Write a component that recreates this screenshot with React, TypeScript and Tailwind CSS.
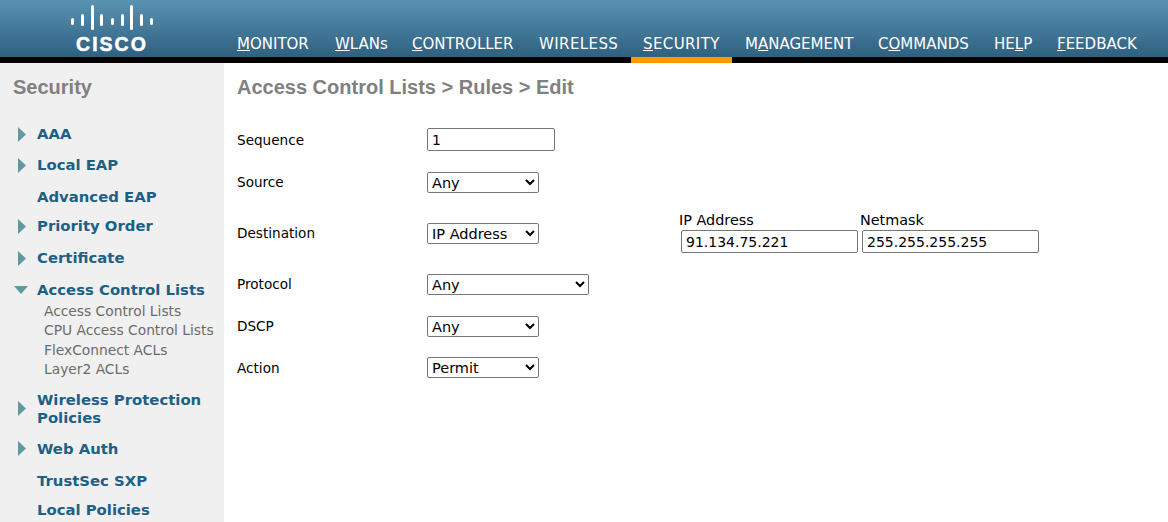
import React from 'react';

const navItems = [
  { key: 'M', rest: 'ONITOR', pre: '', cls: 'w-[98px]' },
  { key: 'W', rest: 'LANs', pre: '', cls: 'w-[77px]' },
  { key: 'C', rest: 'ONTROLLER', pre: '', cls: 'w-[127px]' },
  { key: '', rest: 'WIRELESS', pre: '', cls: 'w-[104px] tracking-[0.400px]' },
  { key: 'S', rest: 'ECURITY', pre: '', cls: 'w-[102px] tracking-[0.400px]' },
  { key: 'A', rest: 'NAGEMENT', pre: 'M', cls: 'w-[133px]' },
  { key: 'O', rest: 'MMANDS', pre: 'C', cls: 'w-[116px]' },
  { key: 'L', rest: 'P', pre: 'HE', cls: 'w-[63px]' },
  { key: 'F', rest: 'EEDBACK', pre: '', cls: 'w-[100px]' },
];

const Arrow = ({ open }: { open?: boolean }) =>
  open ? (
    <svg width="14" height="9" viewBox="0 0 14 9" className="shrink-0 -ml-[4px]">
      <path d="M0 0 H14 L7 8 Z" fill="#5f9aa0" />
    </svg>
  ) : (
    <svg width="9" height="15" viewBox="0 0 9 15" className="shrink-0">
      <path d="M0 0 L8 7.500 L0 15 Z" fill="#5f9aa0" />
    </svg>
  );

const CiscoLogo = () => (
  <div className="flex flex-col items-center w-[84px]">
    <svg width="84" height="33" viewBox="0 0 84 33" fill="#ffffff">
      <rect x="1" y="18" width="3" height="7" rx="1.500" />
      <rect x="11" y="14" width="3" height="12" rx="1.500" />
      <rect x="21" y="5" width="3" height="25" rx="1.500" />
      <rect x="30" y="14" width="3" height="12" rx="1.500" />
      <rect x="41" y="18" width="3" height="7" rx="1.500" />
      <rect x="51" y="14" width="3" height="12" rx="1.500" />
      <rect x="60" y="5" width="3" height="25" rx="1.500" />
      <rect x="70" y="14" width="3" height="12" rx="1.500" />
      <rect x="80" y="18" width="3" height="7" rx="1.500" />
    </svg>
    <span className="font-['Liberation_Sans',sans-serif] font-bold text-white text-[19.500px] leading-[22px] tracking-[2px] [-webkit-text-stroke:0.5px_white]">CISCO</span>
  </div>
);

const menu = [
  { label: 'AAA', arrow: true, mb: 'mb-[13px]' },
  { label: 'Local EAP', arrow: true, mb: 'mb-[14px]' },
  { label: 'Advanced EAP', mb: 'mb-[11px]' },
  { label: 'Priority Order', arrow: true, mb: 'mb-[14px]' },
  { label: 'Certificate', arrow: true, mb: 'mb-[14px]' },
];

const subLinks = ['Access Control Lists', 'CPU Access Control Lists', 'FlexConnect ACLs', 'Layer2 ACLs'];

const Heading = ({ label, arrow, open, className = '' }: { label: string; arrow?: boolean; open?: boolean; className?: string }) => (
  <div className={`flex items-center ${className}`}>
    <div className="w-[37px] shrink-0 pl-[18px] flex items-center">{arrow && <Arrow open={open} />}</div>
    <span className="font-bold text-[14.850px] leading-[18px] text-[#1d6085]">{label}</span>
  </div>
);

const inputCls = 'h-[23px] border border-[#767676] rounded-[2px] bg-white px-1 text-[14px] text-black outline-none';
const selectCls = 'h-[21px] border border-[#767676] rounded-[2px] bg-white pl-0 pt-px text-[14.500px] text-black';

const Row = ({ label, h, children }: { label: string; h: string; children: React.ReactNode }) => (
  <div className={`flex items-center ${h}`}>
    <div className="w-[190px] text-[13.600px] text-black">{label}</div>
    {children}
  </div>
);

export default function App() {
  return (
    <div className="h-[522px] w-[1168px] overflow-hidden bg-white font-['DejaVu_Sans',sans-serif]">
      <header className="h-[57px] bg-gradient-to-b from-[#5a93b2] to-[#2f6080] flex">
        <div className="w-[237px] pl-[70px]">
          <CiscoLogo />
        </div>
        <nav className="flex items-end">
          {navItems.map((item) => (
            <div key={item.rest} className={`h-[26px] text-[15px] leading-[26px] text-white whitespace-nowrap ${item.cls}`}>
              {item.pre}
              {item.key && <span className="underline">{item.key}</span>}
              {item.rest}
            </div>
          ))}
        </nav>
      </header>
      <div className="h-[6px] bg-black flex">
        <div className="w-[101px] ml-[631px] bg-[#ff9900]" />
      </div>
      <div className="flex h-[459px]">
        <aside className="w-[224px] shrink-0 bg-[#f0f0f0]">
          <h2 className="font-['Liberation_Sans',sans-serif] font-bold text-[20px] leading-[24px] text-[#808080] pl-[13px] pt-[12px]">Security</h2>
          <div className="mt-[26px] flex flex-col">
            {menu.map((m) => (
              <Heading key={m.label} label={m.label} arrow={m.arrow} className={m.mb} />
            ))}
            <div className="mb-[11px]">
              <Heading label="Access Control Lists" arrow open />
              <div className="pl-[44px] pt-[2.500px] text-[13.800px] leading-[19.500px] text-[#6b6b6b] whitespace-nowrap">
                {subLinks.map((s) => (
                  <div key={s}>{s}</div>
                ))}
              </div>
            </div>
            <Heading label="Wireless Protection Policies" arrow className="mb-[13px]" />
            <Heading label="Web Auth" arrow className="mb-[14px]" />
            <Heading label="TrustSec SXP" className="mb-[11px]" />
            <Heading label="Local Policies" />
          </div>
        </aside>
        <main className="pl-[13px] flex-1">
          <h1 className="font-['Liberation_Sans',sans-serif] font-bold text-[20px] leading-[24px] text-[#808080] pt-[12px]">Access Control Lists &gt; Rules &gt; Edit</h1>
          <div className="mt-[20px] flex flex-col">
            <Row label="Sequence" h="h-[42px]">
              <input readOnly value="1" className={`${inputCls} w-[128px] -mt-px`} />
            </Row>
            <Row label="Source" h="h-[42px]">
              <select className={`${selectCls} w-[112px]`}><option>Any</option></select>
            </Row>
            <Row label="Destination" h="h-[60px]">
              <select className={`${selectCls} w-[112px]`}><option>IP Address</option></select>
              <div className="ml-[142px] flex gap-[4px] -mt-[2px]">
                <div className="flex flex-col w-[177px]">
                  <span className="text-[14.400px] leading-[19px] text-black -ml-[2px]">IP Address</span>
                  <input readOnly value="91.134.75.221" className={`${inputCls} w-[177px]`} />
                </div>
                <div className="flex flex-col w-[177px]">
                  <span className="text-[14.400px] leading-[19px] text-black -ml-[2px]">Netmask</span>
                  <input readOnly value="255.255.255.255" className={`${inputCls} w-[177px]`} />
                </div>
              </div>
            </Row>
            <Row label="Protocol" h="h-[42px]">
              <select className={`${selectCls} w-[162px]`}><option>Any</option></select>
            </Row>
            <Row label="DSCP" h="h-[42px]">
              <select className={`${selectCls} w-[112px]`}><option>Any</option></select>
            </Row>
            <Row label="Action" h="h-[42px]">
              <select className={`${selectCls} w-[112px] -mt-px`}><option>Permit</option></select>
            </Row>
          </div>
        </main>
      </div>
    </div>
  );
}
